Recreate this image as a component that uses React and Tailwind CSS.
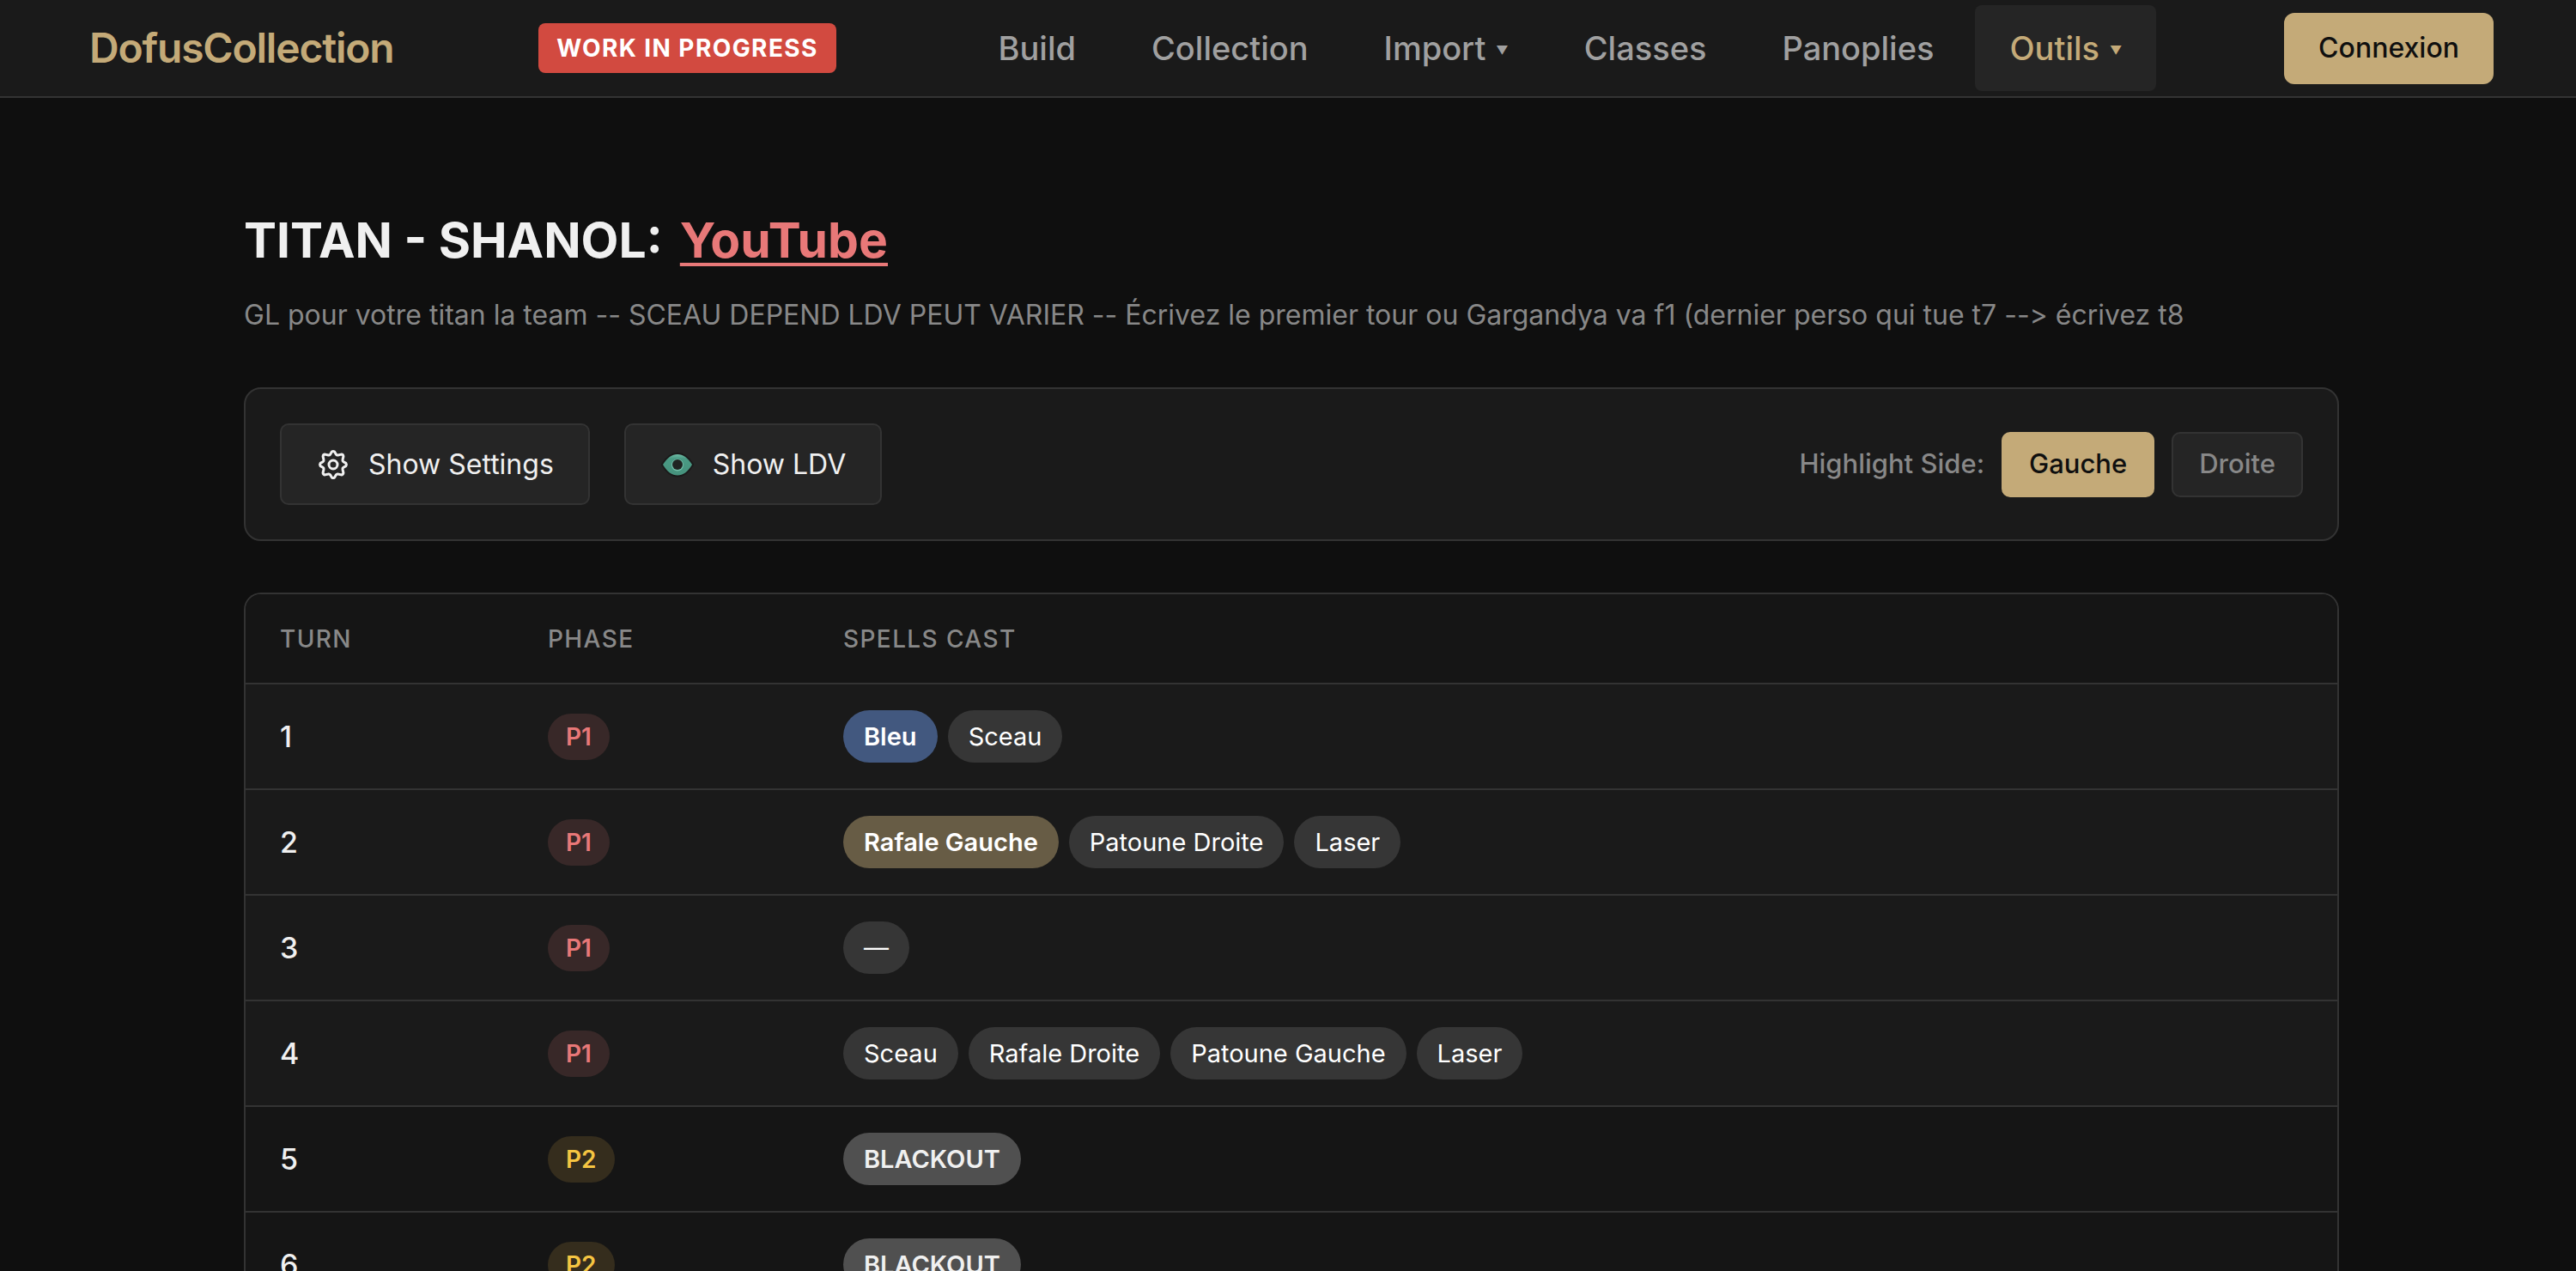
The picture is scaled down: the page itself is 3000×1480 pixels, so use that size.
import { useState } from 'react'

const NAV_LINKS = [
  { label: 'Build' },
  { label: 'Collection' },
  { label: 'Import', menu: true },
  { label: 'Classes' },
  { label: 'Panoplies' },
  { label: 'Outils', menu: true, active: true },
]

const TURNS = [
  { turn: 1, phase: 'P1', spells: [{ name: 'Bleu', tone: 'blue' }, { name: 'Sceau' }] },
  { turn: 2, phase: 'P1', spells: [{ name: 'Rafale Gauche', side: 'Gauche' }, { name: 'Patoune Droite' }, { name: 'Laser' }] },
  { turn: 3, phase: 'P1', spells: [{ name: '—' }] },
  { turn: 4, phase: 'P1', spells: [{ name: 'Sceau' }, { name: 'Rafale Droite', side: 'Droite' }, { name: 'Patoune Gauche' }, { name: 'Laser' }] },
  { turn: 5, phase: 'P2', spells: [{ name: 'BLACKOUT', tone: 'blackout' }] },
  { turn: 6, phase: 'P2', spells: [{ name: 'BLACKOUT', tone: 'blackout' }] },
]

const PHASE_STYLES = {
  P1: { row: 'bg-[#1a1a1a]', pill: 'bg-[#382828] text-[#e87878]' },
  P2: { row: 'bg-[#151515]', pill: 'bg-[#352d1d] text-[#f5c542]' },
}

const SPELL_STYLES = {
  normal: 'bg-[#363636] text-white',
  blue: 'bg-[#42587f] font-semibold text-white',
  highlight: 'bg-[#675c45] font-semibold text-white',
  blackout: 'bg-[#505050] font-semibold text-[#f0f0f0]',
}

function GearIcon() {
  return (
    <svg viewBox="-20 -20 40 40" className="size-10" fill="none" stroke="currentColor" strokeWidth="3" strokeLinejoin="round" aria-hidden="true">
      <path d="M-1.600 -14.900 Q0 -16 1.600 -14.900 L3.300 -12 Q4.400 -10.600 5.600 -11 L9.400 -11.900 Q11.800 -11.800 11.900 -9.400 L11 -5.600 Q10.600 -4.400 12 -3.300 L14.900 -1.600 Q16 0 14.900 1.600 L12 3.300 Q10.600 4.400 11 5.600 L11.900 9.400 Q11.800 11.800 9.400 11.900 L5.600 11 Q4.400 10.600 3.300 12 L1.600 14.900 Q0 16 -1.600 14.900 L-3.300 12 Q-4.400 10.600 -5.600 11 L-9.400 11.900 Q-11.800 11.800 -11.900 9.400 L-11 5.600 Q-10.600 4.400 -12 3.300 L-14.900 1.600 Q-16 0 -14.900 -1.600 L-12 -3.300 Q-10.600 -4.400 -11 -5.600 L-11.900 -9.400 Q-11.800 -11.800 -9.400 -11.900 L-5.600 -11 Q-4.400 -10.600 -3.300 -12 Z" />
      <circle r="5" />
    </svg>
  )
}

function EyeIcon() {
  return (
    <svg viewBox="-20 -20 40 40" className="size-10" aria-hidden="true">
      <defs>
        <linearGradient id="iris" x1="0" y1="0" x2="0" y2="1">
          <stop offset="0" stopColor="#72bfa9" />
          <stop offset="0.2" stopColor="#4a9a84" />
          <stop offset="1" stopColor="#46927d" />
        </linearGradient>
      </defs>
      <path
        d="M-17 0 C-12 -8 -6.500 -12 0 -12 C6.500 -12 12 -8 17 0 C12 8.500 6.500 12.500 0 12.500 C-6.500 12.500 -12 8.500 -17 0Z"
        fill="url(#iris)"
        stroke="#1a1a1a"
        strokeWidth="4"
        strokeLinejoin="round"
        paintOrder="stroke"
      />
      <circle cy="0.5" r="7" fill="#72bfa9" />
      <circle r="6" fill="#1f2422" />
    </svg>
  )
}

function Header() {
  return (
    <header className="flex h-[114px] items-center justify-between border-b-2 border-[#333] bg-[#1a1a1a] pr-24 pl-[104px]">
      <a href="#" className="pr-5 text-[48px] leading-none font-semibold tracking-tight text-[#c4aa78]">DofusCollection</a>
      <span className="rounded-lg bg-[#d24a40] px-[21px] py-3 text-[28px] leading-[34px] font-bold tracking-wider text-white">WORK IN PROGRESS</span>
      <nav className="flex items-center gap-2">
        {NAV_LINKS.map((link) => (
          <a
            key={link.label}
            href="#"
            className={`flex h-[100px] items-center gap-3 rounded-lg px-10 text-[38px] font-medium ${link.active ? 'bg-[#252525] text-[#c4aa78]' : 'text-[#a0a0a0]'}`}
          >
            {link.label}
            {link.menu && <span className="pt-1 text-[14px]">▼</span>}
          </a>
        ))}
      </nav>
      <button type="button" className="h-[83px] rounded-xl bg-[#c4aa78] px-10 text-[32px] font-medium text-[#0f0f0f]">Connexion</button>
    </header>
  )
}

export default function App() {
  const [side, setSide] = useState('Gauche')

  return (
    <div className="min-h-screen bg-[#0f0f0f] font-['Inter',sans-serif] text-[#f0f0f0]">
      <Header />
      <div className="pl-2">
        <main className="mx-auto max-w-[2440px] pt-[130px]">
          <h1 className="flex gap-5 text-[57px] leading-[72px] font-bold">
            TITAN - SHANOL:
            <a href="#" className="text-[#e87878] underline decoration-4 underline-offset-[6px]">YouTube</a>
          </h1>
          <p className="mt-[27px] text-[32px] leading-[48px] text-[#888] [font-feature-settings:'calt'_0]">
            GL pour votre titan la team -- SCEAU DEPEND LDV PEUT VARIER -- Écrivez le premier tour ou Gargandya va f1 (dernier perso qui tue t7 --&gt; écrivez t8
          </p>

          <div className="mt-[60px] flex items-center justify-between rounded-[20px] border-2 border-[#333] bg-[#1a1a1a] p-10">
            <div className="flex gap-10">
              <button type="button" className="flex h-[95px] items-center gap-[21px] rounded-[10px] border-2 border-[#333] bg-[#252525] px-10 text-[32px]">
                <GearIcon />
                Show Settings
              </button>
              <button type="button" className="flex h-[95px] items-center gap-[21px] rounded-[10px] border-2 border-[#333] bg-[#252525] px-10 text-[32px]">
                <EyeIcon />
                Show LDV
              </button>
            </div>
            <div className="flex items-center gap-5 text-[31px] font-medium">
              <span className="text-[#888]">Highlight Side:</span>
              {['Gauche', 'Droite'].map((option) => (
                <button
                  key={option}
                  type="button"
                  onClick={() => setSide(option)}
                  className={`h-[76px] rounded-[10px] border-2 px-[30px] ${side === option ? 'border-[#c4aa78] bg-[#c4aa78] text-[#0f0f0f]' : 'border-[#333] bg-[#252525] text-[#888]'}`}
                >
                  {option}
                </button>
              ))}
            </div>
          </div>

          <div className="mt-[60px] overflow-hidden rounded-t-[20px] border-2 border-b-0 border-[#333]">
            <table className="w-full table-fixed text-left">
              <thead>
                <tr className="h-[104px] border-b-2 border-[#333] bg-[#151515] text-[28px] tracking-wider text-[#888]">
                  <th className="w-[312px] pl-10 font-medium">TURN</th>
                  <th className="w-[344px] pl-10 font-medium">PHASE</th>
                  <th className="pl-10 font-medium">SPELLS CAST</th>
                </tr>
              </thead>
              <tbody>
                {TURNS.map(({ turn, phase, spells }) => (
                  <tr key={turn} className={`h-[123px] border-b-2 border-[#333] ${PHASE_STYLES[phase].row}`}>
                    <td className="pl-10 text-[34px] font-medium">{turn}</td>
                    <td className="pl-10">
                      <span className={`inline-block rounded-full px-[21px] text-[28px] leading-[54px] font-semibold ${PHASE_STYLES[phase].pill}`}>{phase}</span>
                    </td>
                    <td className="pl-10">
                      <div className="flex gap-3">
                        {spells.map((spell) => (
                          <span
                            key={spell.name}
                            className={`rounded-full px-6 text-[29px] leading-[61px] ${SPELL_STYLES[spell.side === side ? 'highlight' : spell.tone || 'normal']}`}
                          >
                            {spell.name}
                          </span>
                        ))}
                      </div>
                    </td>
                  </tr>
                ))}
              </tbody>
            </table>
          </div>
        </main>
      </div>
    </div>
  )
}
